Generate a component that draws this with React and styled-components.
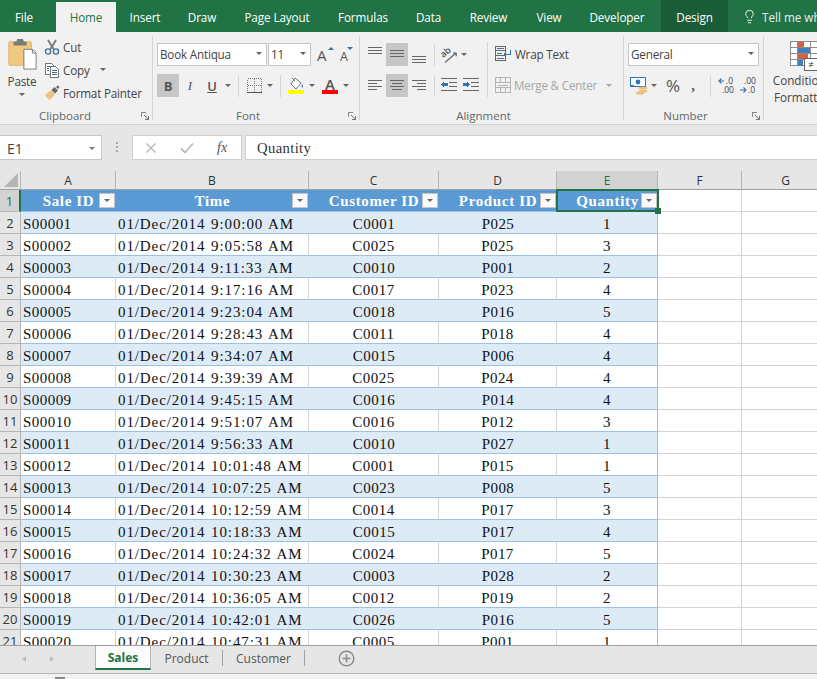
import React from "react";
import styled, { createGlobalStyle } from "styled-components";
import { Lightbulb } from "lucide-react";

const UI = `"Open Sans", "Noto Sans", "Liberation Sans", sans-serif`;
const SERIF = `"Liberation Serif", "Noto Serif", serif`;

const Global = createGlobalStyle`
  html, body { margin: 0; padding: 0; height: 100%; overflow: hidden; background: #fff; }
  #root { height: 100%; }
  * { box-sizing: border-box; }
`;

const Page = styled.div`
  width: 817px; height: 679px; display: flex; flex-direction: column; overflow: hidden;
  font-family: ${UI}; font-size: 12px; color: #444;
`;

/* ---------- title tabs ---------- */
const TabBar = styled.div`
  height: 32px; flex: none; background: #217346; display: flex; align-items: flex-end; white-space: nowrap;
`;
const Tab = styled.div`
  width: ${p => p.$w}px; flex: none; height: ${p => (p.$active ? 30 : 32)}px;
  margin-left: ${p => p.$ml || 0}px;
  display: flex; align-items: center; justify-content: center; padding-top: ${p => (p.$active ? 0 : 1)}px;
  font-size: 11.7px; letter-spacing: -0.1px;
  background: ${p => (p.$active ? "#f1f1f1" : p.$dark ? "#1a5c38" : "transparent")};
  color: ${p => (p.$active ? "#217346" : "#fff")};
`;
const TellMe = styled.div`
  display: flex; align-items: center; gap: 5px; padding: 1px 0 0 14px; color: #e6f0ea; font-size: 11.7px; height: 32px;
`;

/* ---------- ribbon ---------- */
const Ribbon = styled.div`
  height: 93px; flex: none; background: #f1f1f1; border-bottom: 1px solid #d2d2d2; display: flex;
  padding-top: 4px; overflow: hidden;
`;
const Group = styled.div`
  width: ${p => p.$w}px; flex: none; height: 84px; display: flex; flex-direction: column;
  border-right: ${p => (p.$last ? "none" : "1px solid #d4d4d4")};
`;
const GroupBody = styled.div`
  flex: 1; min-height: 0; display: flex; padding-left: ${p => p.$pl ?? 4}px;
`;
const GroupFoot = styled.div`
  height: 16px; margin-bottom: -4px; display: flex; align-items: center; position: relative; flex: none;
`;
const GroupLabel = styled.div`
  flex: 1; text-align: center; color: #666; font-size: 11.5px; line-height: 16px; padding-right: ${p => p.$pr ?? 16}px;
`;
const Launcher = styled.svg`
  position: absolute; right: 3px; top: 4px; width: 8px; height: 8px;
`;
const Stack = styled.div`
  display: flex; flex-direction: column; gap: 8px; padding-top: 7px;
`;
const Row = styled.div`
  height: 23px; display: flex; align-items: center;
`;
const PasteCol = styled.div`
  width: 32px; display: flex; flex-direction: column; align-items: center; margin-right: 6px; flex: none; padding-top: 2px;
`;
const PasteLabel = styled.div`
  font-size: 11.7px; letter-spacing: -0.2px; color: #444; line-height: 16px; margin-top: 3px;
`;
const ClipCol = styled.div`
  display: flex; flex-direction: column; margin-top: -1px;
`;
const ClipRow = styled.div`
  height: 23px; display: flex; align-items: center; gap: 3px; white-space: nowrap; color: #444; font-size: 11.7px; letter-spacing: -0.2px;
`;
const Select = styled.div`
  width: ${p => p.$w}px; height: 23px; flex: none; background: #fff; border: 1px solid #c6c6c6;
  margin-right: ${p => p.$mr || 0}px;
  display: flex; align-items: center; justify-content: space-between; padding: 0 4px 2px 2px;
  font-size: 11.7px; letter-spacing: -0.2px; color: #444; white-space: nowrap;
`;
const Caret = styled.span`
  display: block; width: 0; height: 0; flex: none; border: 3px solid transparent; border-bottom: none;
  border-top: 3px solid ${p => p.$c || "#666"}; margin: ${p => p.$m || 0};
`;
const CaretBox = styled.div`
  width: ${p => p.$w || 10}px; height: 23px; display: flex; align-items: center; justify-content: center; flex: none;
`;
const ToolBtn = styled.div`
  width: ${p => p.$w || 22}px; height: 23px; flex: none; display: flex; align-items: center; justify-content: center;
  background: ${p => (p.$on ? "#c6c6c6" : "transparent")}; color: #555; margin-left: ${p => p.$ml || 0}px;
  font-size: ${p => p.$fs || 13}px; font-weight: ${p => p.$fw || 400}; font-style: ${p => p.$it ? "italic" : "normal"};
  text-decoration: ${p => p.$ul ? "underline" : "none"};
  font-family: ${p => p.$serif ? SERIF : UI};
`;
const VSep = styled.div`
  width: 1px; height: 22px; flex: none; background: #d4d4d4; margin: 0 ${p => p.$r ?? 0}px 0 ${p => p.$l ?? 0}px;
`;
const SizeA = styled.div`
  width: ${p => p.$w}px; height: 23px; flex: none; margin-left: ${p => p.$ml || 0}px; display: flex; align-items: flex-end;
  font-size: ${p => p.$big ? 15 : 12.5}px; color: #555; line-height: 1; padding-bottom: 3px;
  padding-left: 1px; position: relative;
`;
const SizeTri = styled.span`
  position: absolute; right: 0; top: 4px; width: 0; height: 0; border: 3px solid transparent;
  ${p => p.$down ? "border-bottom: none; border-top: 3px solid #41719c;" : "border-top: none; border-bottom: 3px solid #41719c;"}
`;
const AlignRight = styled.div`
  border-left: 1px solid #d4d4d4; height: 55px; margin-top: 6px; padding-left: 7px; display: flex; flex-direction: column; gap: 8px; padding-top: 1px;
`;
const AlignItem = styled.div`
  height: 23px; display: flex; align-items: center; gap: 3px; white-space: nowrap; font-size: 11.7px; letter-spacing: -0.2px; padding-bottom: 1px;
  color: ${p => p.$off ? "#a6a6a6" : "#444"};
`;
const AlignCol = styled.div`
  width: 123px; flex: none;
`;
const BigCol = styled.div`
  width: 80px; flex: none; display: flex; flex-direction: column; align-items: center; padding-top: 5px;
`;
const BigText = styled.div`
  text-align: center; white-space: nowrap; line-height: 17px; margin-top: -1px; font-size: 11.7px; color: #444;
`;

/* ---------- formula bar ---------- */
const FormulaBar = styled.div`
  height: 46px; flex: none; background: #e6e6e6; padding-top: 10px; display: flex; align-items: flex-start;
`;
const NameBox = styled.div`
  width: 102px; height: 25px; flex: none; background: #fff; border: 1px solid #c6c6c6; border-left: none;
  display: flex; align-items: center; justify-content: space-between; padding: 1px 6px 0 7px; color: #444; font-size: 14px;
`;
const Grip = styled.div`
  width: 30px; height: 25px; flex: none; display: flex; align-items: center; justify-content: center;
`;
const FnBox = styled.div`
  width: 110px; height: 25px; flex: none; background: #fff; border: 1px solid #d0d0d0; display: flex; align-items: center; padding-left: 12px; gap: 23px;
`;
const FxText = styled.span`
  font-family: ${SERIF}; font-style: italic; font-size: 14px; color: #555;
`;
const FormulaInput = styled.div`
  flex: 1; height: 25px; margin-left: 3px; background: #fff; border: 1px solid #d0d0d0; border-right: none;
  display: flex; align-items: center; padding: 2px 0 0 11px; font-family: ${SERIF}; font-size: 14.7px; letter-spacing: 0.35px; color: #333;
`;

/* ---------- sheet ---------- */
const Sheet = styled.div`
  flex: 1; min-height: 0; overflow: hidden; background: #fff; display: grid;
  grid-template-columns: 21px 95px 193px 130px 118px 101px 84px 88px;
  grid-auto-rows: 22px; grid-template-rows: 19px;
  align-content: start;
`;
const Corner = styled.div`
  background: #e6e6e6; border-right: 1px solid #b5b5b5; border-bottom: 1px solid #9f9f9f; position: relative;
  display: flex; align-items: flex-end; justify-content: flex-end; padding: 0 2px 2px 0;
`;
const ColHead = styled.div`
  background: ${p => p.$on ? "#d2d2d2" : "#e6e6e6"}; border-right: 1px solid #b5b5b5; border-bottom: 1px solid #9f9f9f;
  color: ${p => p.$on ? "#217346" : "#333"}; font-size: 12px; text-align: center; line-height: 20px;
`;
const RowHead = styled.div`
  background: ${p => p.$on ? "#d2d2d2" : "#e6e6e6"}; border-bottom: 1px solid #b5b5b5;
  border-right: ${p => p.$on ? "2px solid #217346" : "1px solid #b5b5b5"};
  color: ${p => p.$on ? "#217346" : "#333"}; font-size: 13px; text-align: center; line-height: 22px;
`;
const HeadCell = styled.div`
  background: #5b9bd5; color: #fff; font-family: ${SERIF}; font-weight: 700; font-size: 15px; letter-spacing: 0.65px;
  text-align: center; line-height: 22px; position: relative; border-bottom: 1px solid #9bc2e6;
`;
const FilterBtn = styled.span`
  position: absolute; right: 1px; top: 3px; width: 16px; height: 15px; background: #fafafa; border: 1px solid #c4c4c4;
  display: flex; align-items: center; justify-content: center;
`;
const Selection = styled.span`
  position: absolute; left: -1px; right: -1px; top: -1px; bottom: -1px; border: 2px solid #217346;
  pointer-events: none;
`;
const Handle = styled.span`
  position: absolute; right: -4px; bottom: -4px; width: 6px; height: 6px; background: #217346;
`;
const Cell = styled.div`
  font-family: ${SERIF}; font-size: 15px; color: #111; line-height: 24px; white-space: nowrap;
  letter-spacing: ${p => p.$wide ? 0.9 : 0.45}px; word-spacing: ${p => p.$wide ? 1 : 0}px;
  text-align: ${p => p.$center ? "center" : "left"}; padding-left: ${p => p.$center ? 0 : 2}px;
  background: ${p => p.$band ? "#ddebf7" : "#fff"}; border-bottom: 1px solid #9bc2e6;
  border-right: ${p => p.$end ? "1px solid #9bc2e6" : p.$band ? "none" : "1px solid #d4d4d4"};
`;
const Blank = styled.div`
  border-right: 1px solid #d4d4d4; border-bottom: 1px solid #d4d4d4; background: #fff;
`;

/* ---------- sheet tabs ---------- */
const SheetBar = styled.div`
  height: 29px; flex: none; background: #e6e6e6; border-top: 1px solid #9f9f9f; border-bottom: 1px solid #b5b5b5;
  display: flex; align-items: flex-start; position: relative; z-index: 1;
`;
const NavArea = styled.div`
  width: 95px; height: 26px; flex: none; display: flex; align-items: center; padding-left: 22px; gap: 24px;
`;
const NavArrow = styled.span`
  display: block; width: 0; height: 0; border: 3.5px solid transparent;
  ${p => p.$left ? "border-left: none; border-right: 4px solid #bdbdbd;" : "border-right: none; border-left: 4px solid #bdbdbd;"}
`;
const SheetTab = styled.div`
  width: ${p => p.$w}px; flex: none; height: 24px; display: flex; align-items: center; justify-content: center;
  font-size: 12px; position: relative;
  ${p => p.$active
    ? "background: #fbfbfb; color: #217346; font-weight: 700; border-bottom: 2px solid #217346; border-left: 1px solid #b5b5b5; border-right: 1px solid #b5b5b5;"
    : "color: #555;"}
`;
const TabSep = styled.div`
  width: 1px; height: 16px; margin-top: 4px; background: #9f9f9f; flex: none;
`;
const PlusWrap = styled.div`
  margin-left: 33px; height: 24px; display: flex; align-items: center; flex: none;
`;
const Status = styled.div`
  height: 5px; flex: none; background: #f1f1f1; overflow: hidden; padding: 3px 0 0 55px;
`;
const StatusMark = styled.div`
  width: 10px; height: 2px; background: #8a8a8a;
`;

/* ---------- icons ---------- */
const Lines = ({ rows, c = "#666" }) => (
  <svg width="22" height="23" shapeRendering="crispEdges">
    {rows.map(([x, w, y], i) => <rect key={i} x={x} y={y} width={w} height="1" fill={c} />)}
  </svg>
);
const PasteIcon = () => (
  <svg width="32" height="32" viewBox="0 0 32 34">
    <rect x="2" y="4" width="24" height="25" rx="1" fill="#f0c97e" stroke="#e0b565" />
    <path d="M7 4h3l1-3h6l1 3h3v4H7z" fill="#7a7a7a" />
    <path d="M18 12h9l4 4v17H18z" fill="#fff" stroke="#777" />
    <path d="M27 12v4h4" fill="none" stroke="#777" />
  </svg>
);
const CutIcon = () => (
  <svg width="16" height="16" viewBox="0 0 16 16">
    <path d="M4 1l5.5 9M12 1L6.5 10" stroke="#777" strokeWidth="1.8" fill="none" />
    <circle cx="4" cy="12.5" r="2.6" fill="none" stroke="#41719c" strokeWidth="1.4" />
    <circle cx="12" cy="12.5" r="2.6" fill="none" stroke="#41719c" strokeWidth="1.4" />
  </svg>
);
const CopyIcon = () => (
  <svg width="16" height="16" viewBox="0 0 16 16" shapeRendering="crispEdges">
    <path d="M1.5 1.5h6l2 2v9h-8z" fill="#fff" stroke="#777" />
    <path d="M6.5 4.5h5l3 3v8h-8z" fill="#fff" stroke="#777" />
    <path d="M8 8h5M8 10h5M8 12h5M3 4h3M3 6h2M3 8h2" stroke="#41719c" />
  </svg>
);
const BrushIcon = () => (
  <svg width="16" height="16" viewBox="0 0 16 16">
    <path d="M1 10l6-5 4 4-5 6-2-1 1-2-2 1z" fill="#eec27a" />
    <path d="M7.5 5l3-3 3.5 3.5-3 3z" fill="#666" />
    <path d="M12 2l2-1.5 1.5 1.5L14 4z" fill="#666" />
  </svg>
);
const BordersIcon = () => (
  <svg width="15" height="15" viewBox="0 0 15 15" shapeRendering="crispEdges">
    <path d="M.5.5h14v14H.5zM7.5.5v14M.5 7.5h14" fill="none" stroke="#777" strokeDasharray="1 1" />
    <path d="M0 14.5h15" stroke="#555" />
  </svg>
);
const FillIcon = () => (
  <svg width="16" height="17" viewBox="0 0 16 17">
    <path d="M7 1l6 5-5 6-5-5z" fill="#fff" stroke="#777" />
    <path d="M4 1l3 3" stroke="#777" />
    <path d="M14 7c.8 1.6 1.6 2.6.8 3.4s-1.8-.8-.8-3.4z" fill="#41719c" />
    <rect x="0" y="13" width="16" height="4" fill="#ffff00" />
  </svg>
);
const FontColorIcon = () => (
  <svg width="16" height="17" viewBox="0 0 16 17">
    <text x="8" y="12.5" textAnchor="middle" fontFamily="Open Sans, sans-serif" fontSize="15" fontWeight="600" fill="#555">A</text>
    <rect x="0" y="13" width="16" height="4" fill="#ff0000" />
  </svg>
);
const OrientIcon = () => (
  <svg width="18" height="18" viewBox="0 0 18 18">
    <text x="1" y="10" fontFamily="Open Sans, sans-serif" fontSize="9" fontWeight="600" fill="#555" transform="rotate(-40 5 8)">ab</text>
    <path d="M5 16.5L16 7M13 7h3.2v3.2" fill="none" stroke="#666" strokeWidth="1.2" />
  </svg>
);
const IndentIcon = ({ flip }) => (
  <svg width="16" height="15" viewBox="0 0 16 15" shapeRendering="crispEdges">
    <path d="M0 .5h16M8 4.5h8M8 8.5h8M0 12.5h16" stroke="#666" />
    {flip
      ? <path d="M0 5h4V3l3 3.5L4 10V8H0z" fill="#2e75b6" />
      : <path d="M7 5H3V3L0 6.5 3 10V8h4z" fill="#2e75b6" />}
  </svg>
);
const WrapIcon = () => (
  <svg width="17" height="16" viewBox="0 0 17 16" shapeRendering="crispEdges">
    <path d="M.5 .5h10v4H.5zM.5 4.5h10v5H.5zM.5 9.5h10v5H.5z" fill="none" stroke="#666" />
    <path d="M2 2.5h7M2 7h5M2 12h7" stroke="#41719c" />
    <path d="M11 8h4V4" fill="none" stroke="#2e75b6" />
    <path d="M8 8l3-2v4z" fill="#2e75b6" />
  </svg>
);
const MergeIcon = () => (
  <svg width="16" height="16" viewBox="0 0 16 16" shapeRendering="crispEdges">
    <path d="M.5.5h15v15H.5zM.5 5.5h15M.5 10.5h15M5.5.5v5M10.5.5v5M5.5 10.5v5M10.5 10.5v5" fill="none" stroke="#b5b5b5" />
    <path d="M3 8h10" stroke="#b5b5b5" />
  </svg>
);
const AcctIcon = () => (
  <svg width="18" height="18" viewBox="0 0 18 18">
    <rect x=".5" y=".5" width="15" height="9" fill="#fff" stroke="#2e75b6" />
    <circle cx="8" cy="5" r="2.4" fill="#2e75b6" />
    <rect x="0" y="8" width="4" height="2" fill="#2e75b6" />
    <ellipse cx="13" cy="11" rx="4.5" ry="1.6" fill="#edc27a" />
    <ellipse cx="13" cy="14" rx="4.5" ry="1.6" fill="#edc27a" />
    <ellipse cx="10" cy="16" rx="4.5" ry="1.6" fill="#edc27a" />
  </svg>
);
const DecIcon = ({ inc }) => (
  <svg width="18" height="18" viewBox="0 0 18 18" fontFamily="Open Sans, sans-serif" fontSize="8.5" fill="#444">
    {inc ? (
      <>
        <text x="9" y="7">.0</text>
        <text x="5" y="16">.00</text>
        <path d="M7 4H2M4.5 1.5L2 4l2.5 2.5" fill="none" stroke="#2e75b6" strokeWidth="1.1" />
      </>
    ) : (
      <>
        <text x="5" y="7">.00</text>
        <text x="9" y="16">.0</text>
        <path d="M1 13h6M4.5 10.5L7 13l-2.5 2.5" fill="none" stroke="#2e75b6" strokeWidth="1.1" />
      </>
    )}
  </svg>
);
const CondIcon = () => (
  <svg width="28" height="32" viewBox="0 0 28 32" shapeRendering="crispEdges">
    <path d="M.5.5h27v24H.5zM.5 6.5h27M.5 12.5h27M.5 18.5h27M7.5.5v24M20.5.5v24" fill="#fff" stroke="#8c8c8c" />
    <rect x="8" y="1" width="6" height="5" fill="#d9613f" />
    <rect x="8" y="7" width="12" height="5" fill="#3f7fbf" />
    <rect x="8" y="13" width="10" height="5" fill="#d9613f" />
    <rect x="8" y="19" width="5" height="6" fill="#3f7fbf" />
    <rect x="14.5" y="17.5" width="13" height="12" fill="#fff" stroke="#666" />
    <text x="21" y="27" textAnchor="middle" fontSize="10" fill="#333" fontFamily="Open Sans, sans-serif">≠</text>
  </svg>
);
const Corner3 = () => (
  <Launcher viewBox="0 0 8 8" shapeRendering="crispEdges">
    <path d="M.5 5V.5H5" fill="none" stroke="#888" />
    <path d="M3 3l4 4M7 4v3H4" fill="none" stroke="#777" />
  </Launcher>
);
const GripDots = () => (
  <svg width="3" height="11"><rect y="0" width="2" height="2" fill="#aaa" /><rect y="4" width="2" height="2" fill="#aaa" /><rect y="8" width="2" height="2" fill="#aaa" /></svg>
);
const XMark = () => (
  <svg width="12" height="12"><path d="M1.5 1.5l9 9M10.5 1.5l-9 9" stroke="#bdbdbd" strokeWidth="1.6" /></svg>
);
const CheckMark = () => (
  <svg width="14" height="12"><path d="M1 6.5l4 4 8-9" fill="none" stroke="#bdbdbd" strokeWidth="1.8" /></svg>
);
const PlusCircle = () => (
  <svg width="17" height="17" viewBox="0 0 17 17">
    <circle cx="8.5" cy="8.5" r="7.3" fill="none" stroke="#8a8a8a" strokeWidth="1.4" />
    <path d="M8.5 4.5v8M4.5 8.5h8" stroke="#8a8a8a" strokeWidth="1.6" />
  </svg>
);

/* ---------- data ---------- */
const rows = [
  ["S00001", "9:00:00 AM", "C0001", "P025", 1], ["S00002", "9:05:58 AM", "C0025", "P025", 3],
  ["S00003", "9:11:33 AM", "C0010", "P001", 2], ["S00004", "9:17:16 AM", "C0017", "P023", 4],
  ["S00005", "9:23:04 AM", "C0018", "P016", 5], ["S00006", "9:28:43 AM", "C0011", "P018", 4],
  ["S00007", "9:34:07 AM", "C0015", "P006", 4], ["S00008", "9:39:39 AM", "C0025", "P024", 4],
  ["S00009", "9:45:15 AM", "C0016", "P014", 4], ["S00010", "9:51:07 AM", "C0016", "P012", 3],
  ["S00011", "9:56:33 AM", "C0010", "P027", 1], ["S00012", "10:01:48 AM", "C0001", "P015", 1],
  ["S00013", "10:07:25 AM", "C0023", "P008", 5], ["S00014", "10:12:59 AM", "C0014", "P017", 3],
  ["S00015", "10:18:33 AM", "C0015", "P017", 4], ["S00016", "10:24:32 AM", "C0024", "P017", 5],
  ["S00017", "10:30:23 AM", "C0003", "P028", 2], ["S00018", "10:36:05 AM", "C0012", "P019", 2],
  ["S00019", "10:42:01 AM", "C0026", "P016", 5], ["S00020", "10:47:31 AM", "C0005", "P001", 1],
];
const tabs = [
  ["Insert", 58], ["Draw", 56], ["Page Layout", 94], ["Formulas", 78], ["Data", 53],
  ["Review", 67], ["View", 54], ["Developer", 82],
];
const heads = ["Sale ID", "Time", "Customer ID", "Product ID", "Quantity"];

export default function App() {
  return (
    <Page>
      <Global />
      <TabBar>
        <Tab $w={48}>File</Tab>
        <Tab $w={60} $ml={8} $active>Home</Tab>
        {tabs.map(([t, w]) => <Tab key={t} $w={w}>{t}</Tab>)}
        <Tab $w={67} $ml={3} $dark>Design</Tab>
        <TellMe><Lightbulb size={15} strokeWidth={1.4} color="#fff" />Tell me what</TellMe>
      </TabBar>

      <Ribbon>
        <Group $w={153}>
          <GroupBody $pl={6}>
            <PasteCol>
              <PasteIcon />
              <PasteLabel>Paste</PasteLabel>
              <Caret $m="4px 0 0" />
            </PasteCol>
            <ClipCol>
              <ClipRow><CutIcon />Cut</ClipRow>
              <ClipRow><CopyIcon />Copy<Caret $m="0 0 0 7px" /></ClipRow>
              <ClipRow><BrushIcon />Format Painter</ClipRow>
            </ClipCol>
          </GroupBody>
          <GroupFoot><GroupLabel $pr={22}>Clipboard</GroupLabel><Corner3 /></GroupFoot>
        </Group>

        <Group $w={207}>
          <GroupBody>
            <Stack>
              <Row>
                <Select $w={110} $mr={1}>Book Antiqua<Caret /></Select>
                <Select $w={43}>11<Caret /></Select>
                <SizeA $w={18} $ml={5} $big>A<SizeTri /></SizeA>
                <SizeA $w={14} $ml={5}>A<SizeTri $down /></SizeA>
              </Row>
              <Row>
                <ToolBtn $on $fw={700} $fs={13}>B</ToolBtn>
                <ToolBtn $it $fs={13} $serif>I</ToolBtn>
                <ToolBtn $ul $fw={600} $fs={13}>U</ToolBtn>
                <CaretBox><Caret /></CaretBox>
                <VSep $l={5} />
                <ToolBtn $ml={4}><BordersIcon /></ToolBtn>
                <CaretBox><Caret /></CaretBox>
                <VSep $l={5} />
                <ToolBtn $ml={4}><FillIcon /></ToolBtn>
                <CaretBox><Caret /></CaretBox>
                <ToolBtn $ml={2}><FontColorIcon /></ToolBtn>
                <CaretBox><Caret /></CaretBox>
              </Row>
            </Stack>
          </GroupBody>
          <GroupFoot><GroupLabel>Font</GroupLabel><Corner3 /></GroupFoot>
        </Group>

        <Group $w={264}>
          <GroupBody>
            <AlignCol>
              <Stack>
                <Row>
                  <ToolBtn><Lines rows={[[4, 14, 4], [4, 14, 7], [4, 14, 10]]} /></ToolBtn>
                  <ToolBtn $on><Lines rows={[[4, 14, 7], [4, 14, 10], [4, 14, 13]]} /></ToolBtn>
                  <ToolBtn><Lines rows={[[4, 14, 13], [4, 14, 16], [4, 14, 19]]} /></ToolBtn>
                  <VSep $l={4} $r={3} />
                  <ToolBtn><OrientIcon /></ToolBtn>
                  <CaretBox $w={8}><Caret /></CaretBox>
                </Row>
                <Row>
                  <ToolBtn><Lines rows={[[4, 14, 6], [4, 9, 9], [4, 14, 12], [4, 9, 15]]} /></ToolBtn>
                  <ToolBtn $on><Lines rows={[[4, 14, 6], [6, 10, 9], [4, 14, 12], [6, 10, 15]]} /></ToolBtn>
                  <ToolBtn><Lines rows={[[4, 14, 6], [9, 9, 9], [4, 14, 12], [9, 9, 15]]} /></ToolBtn>
                  <VSep $l={4} $r={3} />
                  <ToolBtn><IndentIcon /></ToolBtn>
                  <ToolBtn><IndentIcon flip /></ToolBtn>
                </Row>
              </Stack>
            </AlignCol>
            <AlignRight>
              <AlignItem><WrapIcon />Wrap Text</AlignItem>
              <AlignItem $off><MergeIcon />Merge &amp; Center<Caret $c="#a6a6a6" $m="0 0 0 6px" /></AlignItem>
            </AlignRight>
          </GroupBody>
          <GroupFoot><GroupLabel>Alignment</GroupLabel></GroupFoot>
        </Group>

        <Group $w={140}>
          <GroupBody>
            <Stack>
              <Row><Select $w={131}>General<Caret /></Select></Row>
              <Row>
                <ToolBtn><AcctIcon /></ToolBtn>
                <CaretBox $w={7}><Caret /></CaretBox>
                <ToolBtn $ml={5} $fs={17}>%</ToolBtn>
                <ToolBtn $w={18} $fs={15} $fw={700} $serif>,</ToolBtn>
                <VSep $l={8} $r={4} />
                <ToolBtn><DecIcon inc /></ToolBtn>
                <ToolBtn><DecIcon /></ToolBtn>
              </Row>
            </Stack>
          </GroupBody>
          <GroupFoot><GroupLabel>Number</GroupLabel><Corner3 /></GroupFoot>
        </Group>

        <Group $w={90} $last>
          <GroupBody $pl={0}>
            <BigCol>
              <CondIcon />
              <BigText>Conditional<br />Formatting</BigText>
            </BigCol>
          </GroupBody>
        </Group>
      </Ribbon>

      <FormulaBar>
        <NameBox>E1<Caret $c="#777" /></NameBox>
        <Grip><GripDots /></Grip>
        <FnBox><XMark /><CheckMark /><FxText>fx</FxText></FnBox>
        <FormulaInput>Quantity</FormulaInput>
      </FormulaBar>

      <Sheet>
        <Corner><svg width="14" height="14"><path d="M14 0v14H0z" fill="#b5b5b5" /></svg></Corner>
        {["A", "B", "C", "D", "E", "F", "G"].map(c => <ColHead key={c} $on={c === "E"}>{c}</ColHead>)}

        <RowHead $on>1</RowHead>
        {heads.map((h, i) => (
          <HeadCell key={h}>
            {h}
            <FilterBtn><Caret $c="#666" /></FilterBtn>
            {i === 4 && <Selection><Handle /></Selection>}
          </HeadCell>
        ))}
        <Blank /><Blank />

        {rows.map((r, i) => {
          const band = i % 2 === 0;
          return (
            <React.Fragment key={r[0]}>
              <RowHead>{i + 2}</RowHead>
              <Cell $band={band}>{r[0]}</Cell>
              <Cell $band={band} $wide>01/Dec/2014 {r[1]}</Cell>
              <Cell $band={band} $center>{r[2]}</Cell>
              <Cell $band={band} $center>{r[3]}</Cell>
              <Cell $band={band} $center $end>{r[4]}</Cell>
              <Blank /><Blank />
            </React.Fragment>
          );
        })}
      </Sheet>

      <SheetBar>
        <NavArea><NavArrow $left /><NavArrow /></NavArea>
        <SheetTab $w={56} $active>Sales</SheetTab>
        <SheetTab $w={71}>Product</SheetTab>
        <TabSep />
        <SheetTab $w={81}>Customer</SheetTab>
        <TabSep />
        <PlusWrap><PlusCircle /></PlusWrap>
      </SheetBar>
      <Status><StatusMark /></Status>
    </Page>
  );
}
